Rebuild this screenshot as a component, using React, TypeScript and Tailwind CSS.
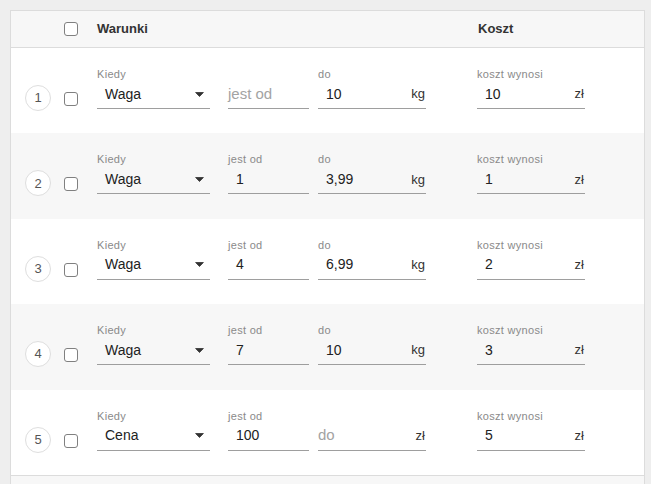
import React from "react";

type Row = {
  kind: string;
  from: string;
  to: string;
  unit: string;
  cost: string;
};

const rows: Row[] = [
  { kind: "Waga", from: "", to: "10", unit: "kg", cost: "10" },
  { kind: "Waga", from: "1", to: "3,99", unit: "kg", cost: "1" },
  { kind: "Waga", from: "4", to: "6,99", unit: "kg", cost: "2" },
  { kind: "Waga", from: "7", to: "10", unit: "kg", cost: "3" },
  { kind: "Cena", from: "100", to: "", unit: "zł", cost: "5" },
];

function Checkbox() {
  return <div className="w-[14px] h-[14px] rounded-[3px] border border-[#808080] bg-white shrink-0" />;
}

function Field({
  label,
  value,
  placeholder,
  suffix,
  width,
  children,
}: {
  label: string;
  value: string;
  placeholder: string;
  suffix?: string;
  width: string;
  children?: React.ReactNode;
}) {
  return (
    <div className={`flex flex-col shrink-0 ${width}`}>
      <div className="h-[12px] text-[11px] leading-[12px] tracking-[0.3px] text-[#8a8a8a]">{value ? label : ""}</div>
      <div className="h-[29px] border-b border-[#9e9e9e] flex items-center pr-[2px] text-[14px]">
        <span className={`flex-1 ${value ? "pl-2 text-[#222]" : "text-[15px] text-[#a3a3a3]"}`}>{value || placeholder}</span>
        {suffix && <span className="text-[13px] text-[#333] mr-[-1px]">{suffix}</span>}
        {children}
      </div>
    </div>
  );
}

export default function App() {
  return (
    <div
      className="w-[651px] h-[484px] overflow-hidden bg-[#eeeeee] pl-[10px] pt-[10px]"
      style={{ fontFamily: '"Liberation Sans", Arial, sans-serif' }}
    >
      <div className="w-[635px] h-[500px] border border-[#dcdcdc] bg-[#f7f7f7]">
        {/* Header */}
        <div className="h-[37px] border-b border-[#dcdcdc] bg-[#f7f7f7] flex items-center pl-[53px] text-[13px] font-bold text-[#333]">
          <Checkbox />
          <div className="ml-[19px] w-[380px]">Warunki</div>
          <div className="ml-[1px]">Koszt</div>
        </div>

        {/* Rows */}
        {rows.map((r, i) => (
          <div
            key={i}
            className={`h-[85.4px] flex items-start pt-[20px] pl-[14px] ${i % 2 === 0 ? "bg-white" : "bg-[#f7f7f7]"}`}
          >
            <div className="mt-[17px] w-[26px] h-[26px] rounded-full border border-[#dedede] bg-white flex items-center justify-center text-[13px] text-[#555] shrink-0">
              {i + 1}
            </div>
            <div className="mt-[24px] ml-[13px]">
              <Checkbox />
            </div>
            <div className="ml-[19px] flex">
              <Field label="Kiedy" value={r.kind} placeholder="" width="w-[113px]">
                <svg width="9" height="5" viewBox="0 0 9 5" className="mr-[4px]">
                  <path d="M0.6 0.5 H8.4 L4.5 4.5 Z" fill="#333" strokeLinejoin="round" stroke="#333" strokeWidth="0.8" />
                </svg>
              </Field>
              <div className="ml-[18px]">
                <Field label="jest od" value={r.from} placeholder="jest od" width="w-[81px]" />
              </div>
              <div className="ml-[9px]">
                <Field label="do" value={r.to} placeholder="do" suffix={r.unit} width="w-[108px]" />
              </div>
              <div className="ml-[51px]">
                <Field label="koszt wynosi" value={r.cost} placeholder="" suffix="zł" width="w-[108px]" />
              </div>
            </div>
          </div>
        ))}
        <div className="border-t border-[#dcdcdc]" />
      </div>
    </div>
  );
}
